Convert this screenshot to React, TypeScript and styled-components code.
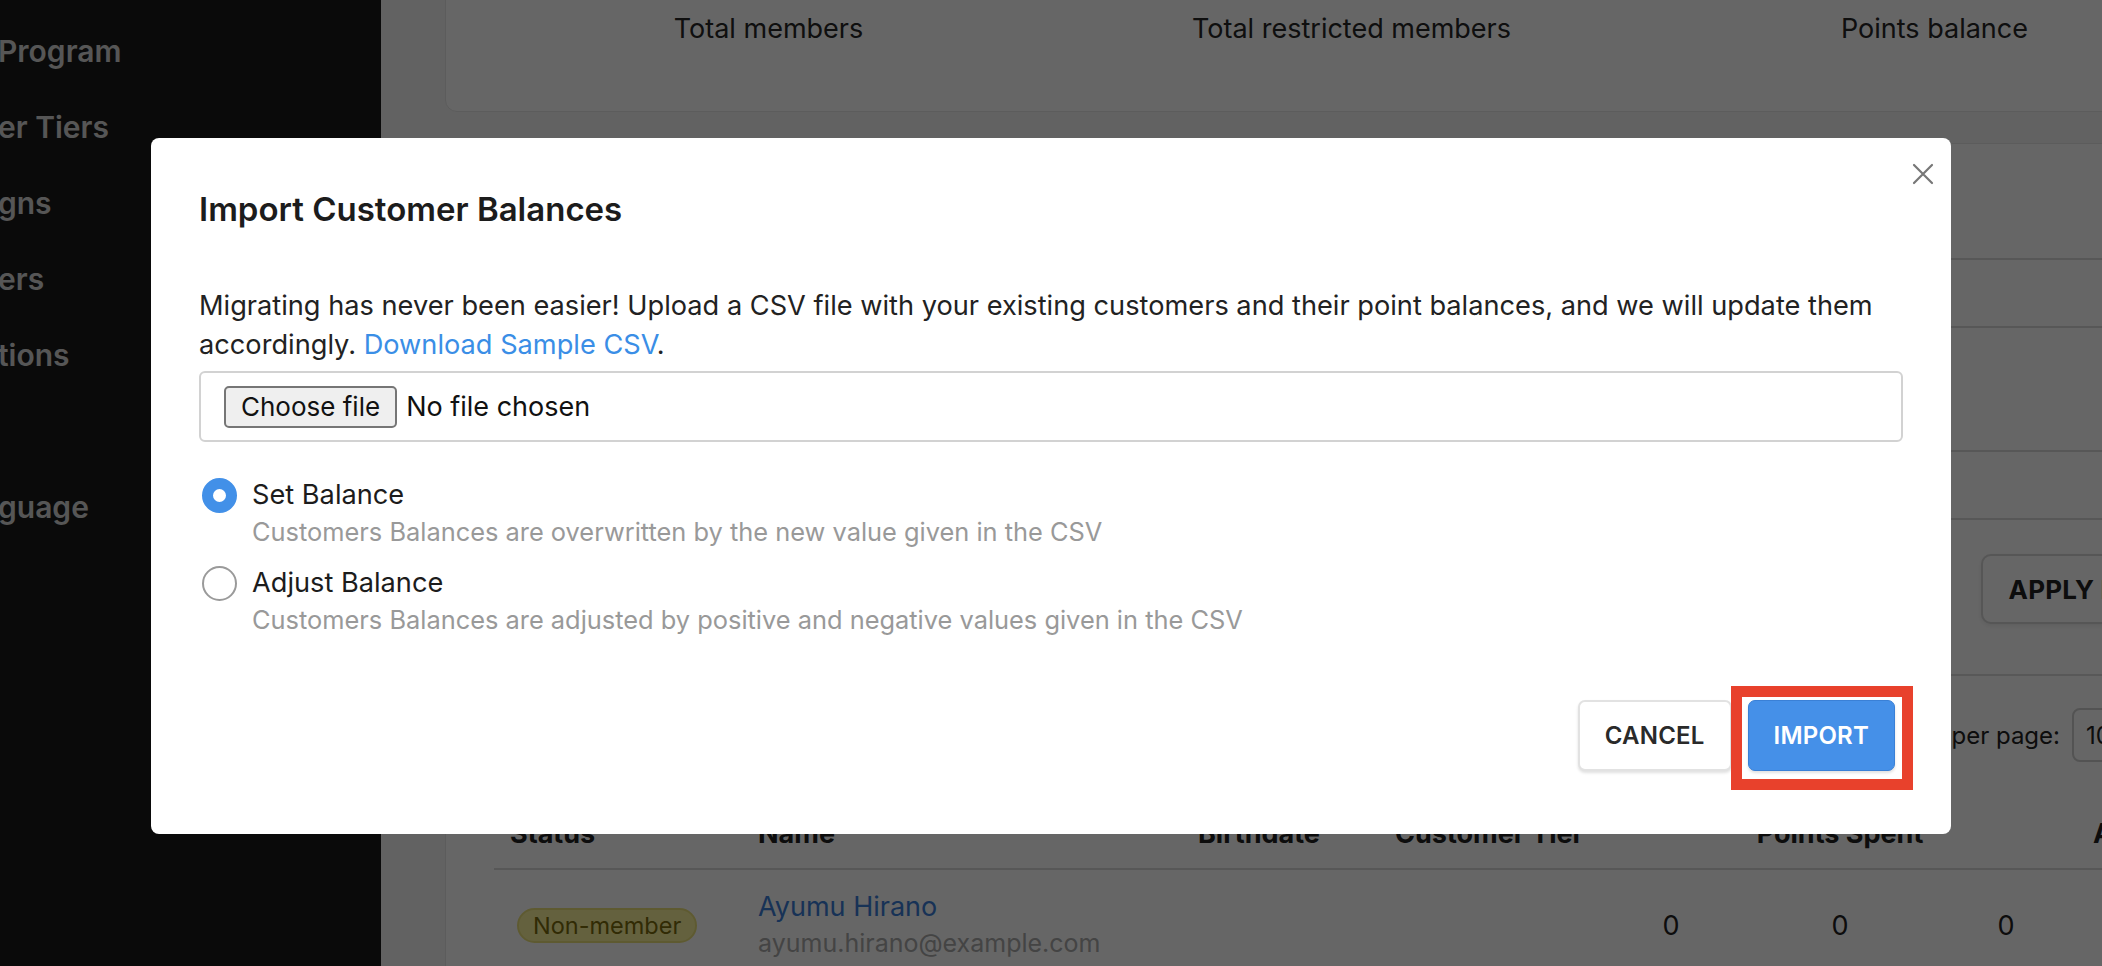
import React from "react";
import styled, { createGlobalStyle } from "styled-components";

const GlobalStyle = createGlobalStyle`
  html, body {
    margin: 0;
    padding: 0;
    overflow: hidden;
    background: #f5f5f5;
    font-family: Inter, "Noto Sans", "Liberation Sans", sans-serif;
  }
  * { box-sizing: border-box; }
`;

const Page = styled.div`
  display: flex;
  align-items: flex-start;
  width: 2102px;
  height: 966px;
  overflow: hidden;
  background: #f5f5f5;
`;

const Sidebar = styled.nav`
  flex: 0 0 381px;
  align-self: stretch;
  background: #1a1a1a;
  overflow: hidden;
`;

const NavList = styled.ul`
  list-style: none;
  margin: 0;
  padding: 13px 0 0;
`;

const NavItem = styled.li`
  height: 76px;
  display: flex;
  align-items: center;
  margin-left: -2px;
  color: #d6d6d6;
  font-size: 30px;
  font-weight: 600;
  white-space: nowrap;
`;

const Main = styled.main`
  flex: 0 0 1900px;
  margin-top: -20px;
  padding-left: 64px;
  display: flex;
  flex-direction: column;
`;

const Card = styled.section`
  flex-shrink: 0;
  width: 1836px;
  background: #fff;
  border: 1px solid #e6e6e6;
  border-radius: 12px;
`;

const StatsCard = styled(Card)`
  height: 132px;
  padding: 30px 31px 0;
`;

const StatsGrid = styled.div`
  display: grid;
  grid-template-columns: repeat(4, 583px);
`;

const StatLabel = styled.div`
  text-align: center;
  font-size: 27px;
  line-height: 36px;
  color: #262626;
`;

const ListCard = styled(Card)`
  margin-top: 31px;
  padding: 48px 48px 40px;
  border-radius: 12px;
`;

const Field = styled.div`
  display: flex;
  flex-direction: column;
  gap: 30px;
  & + & { margin-top: 56px; }
`;

const FieldLabel = styled.label`
  font-size: 26px;
  line-height: 36px;
  font-weight: 600;
  color: #222;
`;

const TextInput = styled.div`
  height: 70px;
  border: 2px solid #d9d9d9;
  border-radius: 8px;
  background: #fff;
`;

const ActionsRow = styled.div`
  display: flex;
  justify-content: flex-end;
  margin-top: 34px;
`;

const OutlineButton = styled.button`
  height: 70px;
  padding: 0 26px;
  border: 2px solid #d6d6d6;
  border-radius: 10px;
  background: #fff;
  box-shadow: 0 2px 4px rgba(0, 0, 0, 0.08);
  font-family: inherit;
  font-size: 26px;
  font-weight: 700;
  color: #222;
  letter-spacing: 0.2px;
`;

const Divider = styled.hr`
  margin: 50px 0 0;
  border: none;
  border-top: 2px solid #dcdcdc;
`;

const PaginationRow = styled.div`
  display: flex;
  justify-content: flex-end;
  align-items: center;
  gap: 12px;
  margin-top: 32px;
  font-size: 24px;
  color: #222;
`;

const SelectBox = styled.div`
  width: 88px;
  height: 54px;
  display: flex;
  align-items: center;
  padding-left: 12px;
  border: 2px solid #cfcfcf;
  border-radius: 8px;
  font-size: 24px;
`;

const PageNav = styled.div`
  width: 60px;
  display: flex;
  justify-content: space-between;
  color: #666;
  font-size: 24px;
`;

const Table = styled.div`
  margin-top: 36px;
  display: grid;
  grid-template-columns: 248px 440px 197px 232px 120px 218px 114px 1fr;
`;

const HeadCell = styled.div<{ $align?: string; $pl?: number }>`
  height: 72px;
  display: flex;
  align-items: center;
  justify-content: ${(p) => p.$align || "flex-start"};
  padding-left: ${(p) => (p.$pl ?? 16)}px;
  border-bottom: 2px solid #dadada;
  font-size: 27px;
  font-weight: 700;
  color: #222;
  white-space: nowrap;
`;

const BodyCell = styled.div<{ $align?: string; $pl?: number }>`
  height: 110px;
  display: flex;
  flex-direction: column;
  justify-content: center;
  align-items: ${(p) => p.$align || "flex-start"};
  padding-left: ${(p) => (p.$pl ?? 16)}px;
  font-size: 27px;
  color: #222;
  white-space: nowrap;
`;

const Badge = styled.span`
  display: inline-flex;
  align-items: center;
  height: 35px;
  padding: 0 14px;
  border-radius: 18px;
  background: #faf39c;
  border: 2px solid #ece27c;
  color: #7a6b0c;
  font-size: 23.5px;
`;

const NameLink = styled.a`
  color: #3b7dd8;
  font-size: 27px;
  line-height: 36px;
  text-decoration: none;
`;

const Email = styled.span`
  color: #aaa;
  font-size: 25px;
  line-height: 36px;
`;

const Backdrop = styled.div`
  position: fixed;
  inset: 0;
  background: rgba(0, 0, 0, 0.6);
`;

const DialogLayer = styled.div`
  position: fixed;
  inset: 0;
  display: flex;
  justify-content: center;
  align-items: flex-start;
  padding-top: 138px;
`;

const Dialog = styled.div`
  position: relative;
  width: 1800px;
  background: #fff;
  border-radius: 8px;
  padding: 53px 48px 63px;
`;

const CloseButton = styled.button`
  position: absolute;
  top: 24px;
  right: 16px;
  width: 24px;
  height: 24px;
  padding: 0;
  border: none;
  background: none;
  display: flex;
  align-items: center;
  justify-content: center;
`;

const Title = styled.h2`
  margin: 0;
  font-size: 33px;
  line-height: 36px;
  font-weight: 600;
  color: #1c1c1c;
`;

const Intro = styled.p`
  margin: 59px 0 0;
  font-size: 27.2px;
  line-height: 39px;
  color: #222;
`;

const Link = styled.a`
  color: #3a8ee6;
  text-decoration: none;
`;

const FileBox = styled.div`
  margin-top: 7px;
  height: 71px;
  display: flex;
  align-items: center;
  gap: 9px;
  padding-left: 23px;
  border: 2px solid #d2d2d2;
  border-radius: 6px;
`;

const ChooseButton = styled.span`
  height: 42px;
  display: inline-flex;
  align-items: center;
  padding: 0 15px;
  background: #efefef;
  border: 2px solid #767676;
  border-radius: 5px;
  font-size: 26px;
  color: #111;
`;

const FileName = styled.span`
  font-size: 27px;
  color: #111;
`;

const RadioGroup = styled.div`
  margin-top: 35px;
  display: flex;
  flex-direction: column;
  gap: 14px;
`;

const Option = styled.label`
  display: grid;
  grid-template-columns: 35px 1fr;
  column-gap: 15px;
  align-items: center;
  padding-left: 3px;
`;

const RadioDot = styled.span<{ $checked?: boolean }>`
  width: 35px;
  height: 35px;
  border-radius: 50%;
  background: #fff;
  border: ${(p) => (p.$checked ? "11px solid #4290e8" : "2px solid #9a9a9a")};
`;

const OptionLabel = styled.span`
  font-size: 27.2px;
  line-height: 36px;
  color: #1c1c1c;
`;

const OptionHint = styled.span`
  grid-column: 2;
  font-size: 25.4px;
  line-height: 38px;
  color: #999;
`;

const Footer = styled.div`
  margin-top: 61px;
  padding-right: 8px;
  display: flex;
  justify-content: flex-end;
  gap: 16px;
`;

const DialogButton = styled.button<{ $primary?: boolean }>`
  height: 71px;
  padding: 0 25px;
  border-radius: 7px;
  font-family: inherit;
  font-size: 24px;
  font-weight: 600;
  letter-spacing: 0.2px;
  color: ${(p) => (p.$primary ? "#fff" : "#2a2a2a")};
  background: ${(p) => (p.$primary ? "#4590e8" : "#fff")};
  border: ${(p) => (p.$primary ? "1px solid #3a80d6" : "2px solid #e2e2e2")};
  box-shadow: 0 2px 3px rgba(0, 0, 0, 0.12);
`;

const Highlight = styled.span`
  position: relative;
  display: inline-flex;
  &::after {
    content: "";
    position: absolute;
    top: -14px;
    bottom: -19px;
    left: -17px;
    right: -18px;
    border: 11px solid #e8412c;
    pointer-events: none;
  }
`;

const navItems = ["Program", "er Tiers", "gns", "ers", "tions", "", "guage"];

export default function App() {
  return (
    <>
      <GlobalStyle />
      <Page>
        <Sidebar>
          <NavList>
            {navItems.map((t, i) => (
              <NavItem key={i}>{t}</NavItem>
            ))}
          </NavList>
        </Sidebar>
        <Main>
          <StatsCard>
            <StatsGrid>
              <StatLabel>Total members</StatLabel>
              <StatLabel>Total restricted members</StatLabel>
              <StatLabel>Points balance</StatLabel>
              <StatLabel>Points redeemed</StatLabel>
            </StatsGrid>
          </StatsCard>
          <ListCard>
            <Field>
              <FieldLabel>Search</FieldLabel>
              <TextInput />
            </Field>
            <Field>
              <FieldLabel>Customer Tier</FieldLabel>
              <TextInput />
            </Field>
            <ActionsRow>
              <OutlineButton>APPLY FILTERS</OutlineButton>
            </ActionsRow>
            <Divider />
            <PaginationRow>
              <span>Rows per page:</span>
              <SelectBox>10</SelectBox>
              <PageNav>
                <span>‹</span>
                <span>›</span>
              </PageNav>
            </PaginationRow>
            <Table>
              <HeadCell>Status</HeadCell>
              <HeadCell>Name</HeadCell>
              <HeadCell>Birthdate</HeadCell>
              <HeadCell>Customer Tier</HeadCell>
              <HeadCell $pl={0} />
              <HeadCell $align="center" $pl={0}>Points Spent</HeadCell>
              <HeadCell $pl={0} />
              <HeadCell $pl={30}>Available Points</HeadCell>

              <BodyCell $pl={23}>
                <Badge>Non-member</Badge>
              </BodyCell>
              <BodyCell>
                <NameLink href="#">Ayumu Hirano</NameLink>
                <Email>ayumu.hirano@example.com</Email>
              </BodyCell>
              <BodyCell />
              <BodyCell />
              <BodyCell $align="center" $pl={0}>0</BodyCell>
              <BodyCell $align="center" $pl={0}>0</BodyCell>
              <BodyCell $align="center" $pl={0}>0</BodyCell>
              <BodyCell $pl={30} />
            </Table>
          </ListCard>
        </Main>
      </Page>
      <Backdrop />
      <DialogLayer>
        <Dialog role="dialog" aria-modal="true">
          <CloseButton aria-label="Close">
            <svg width="22" height="22" viewBox="0 0 22 22">
              <path d="M2 2 L20 20 M20 2 L2 20" stroke="#777" strokeWidth="2.2" strokeLinecap="round" />
            </svg>
          </CloseButton>
          <Title>Import Customer Balances</Title>
          <Intro>
            Migrating has never been easier! Upload a CSV file with your existing customers and their point
            balances, and we will update them accordingly. <Link href="#">Download Sample CSV</Link>.
          </Intro>
          <FileBox>
            <ChooseButton>Choose file</ChooseButton>
            <FileName>No file chosen</FileName>
          </FileBox>
          <RadioGroup>
            <Option>
              <RadioDot $checked />
              <OptionLabel>Set Balance</OptionLabel>
              <OptionHint>Customers Balances are overwritten by the new value given in the CSV</OptionHint>
            </Option>
            <Option>
              <RadioDot />
              <OptionLabel>Adjust Balance</OptionLabel>
              <OptionHint>Customers Balances are adjusted by positive and negative values given in the CSV</OptionHint>
            </Option>
          </RadioGroup>
          <Footer>
            <DialogButton>CANCEL</DialogButton>
            <Highlight>
              <DialogButton $primary>IMPORT</DialogButton>
            </Highlight>
          </Footer>
        </Dialog>
      </DialogLayer>
    </>
  );
}
